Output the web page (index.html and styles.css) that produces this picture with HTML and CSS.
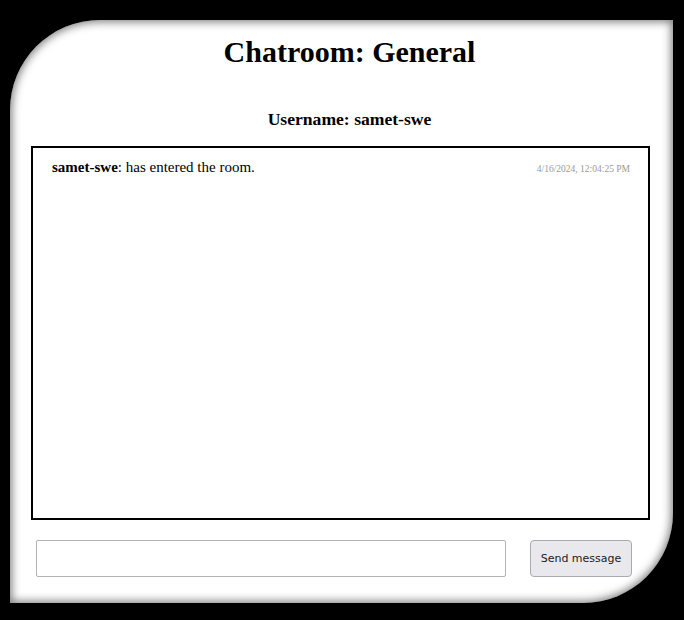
FILE: index.html
```html
<!DOCTYPE html>
<html>
<head>
<meta charset="utf-8">
<link rel="stylesheet" href="styles.css">
</head>
<body>
<div class="frame">
  <h1 class="title">Chatroom: General</h1>
  <h3 class="user">Username: samet-swe</h3>
  <div class="chat">
    <div class="msg">
      <span class="text"><b>samet-swe</b>: has entered the room.</span>
      <span class="time">4/16/2024, 12:04:25 PM</span>
    </div>
  </div>
  <div class="composer">
    <input class="field" type="text">
    <button class="send">Send message</button>
  </div>
</div>
</body>
</html>
```
FILE: styles.css
```css
html, body {
  margin: 0;
  padding: 0;
  background: #000;
}
body {
  width: 684px;
  height: 620px;
  padding-top: 20px;
  padding-left: 10px;
  box-sizing: border-box;
  font-family: "Liberation Serif", "Times New Roman", serif;
}
.frame {
  width: 663px;
  height: 583px;
  background: #fff;
  border-radius: 90px 0 90px 0;
  box-shadow: inset 0 0 9px 2px rgba(0,0,0,0.5);
  box-sizing: border-box;
  padding: 14px 23px 0 21px;
  display: flex;
  flex-direction: column;
}
.title {
  margin: 0;
  font-size: 30px;
  line-height: 36px;
  text-align: center;
  padding-left: 18px;
}
.user {
  margin: 39px 0 0 0;
  font-size: 17.6px;
  line-height: 21px;
  text-align: center;
  padding-left: 18px;
}
.chat {
  margin-top: 16px;
  height: 374px;
  border: 2px solid #000;
  box-sizing: border-box;
  padding: 10px 18px 0 19px;
}
.msg {
  display: flex;
  justify-content: space-between;
  align-items: baseline;
}
.text {
  font-size: 15px;
  line-height: 18px;
}
.time {
  font-size: 9.5px;
  color: #9a9a9a;
}
.composer {
  margin-top: 20px;
  display: flex;
  align-items: center;
  padding-left: 5px;
}
.field {
  width: 470px;
  height: 37px;
  box-sizing: border-box;
  border: 1px solid #b3b3b3;
  border-radius: 2px;
  margin: 0;
}
.send {
  margin-left: 24px;
  width: 102px;
  height: 37px;
  box-sizing: border-box;
  background: #e9e9ed;
  border: 1px solid #a9a9b0;
  border-radius: 4px;
  font-family: "DejaVu Sans", Verdana, sans-serif;
  font-size: 11px;
  color: #1a1a1a;
  padding: 0;
}
```
